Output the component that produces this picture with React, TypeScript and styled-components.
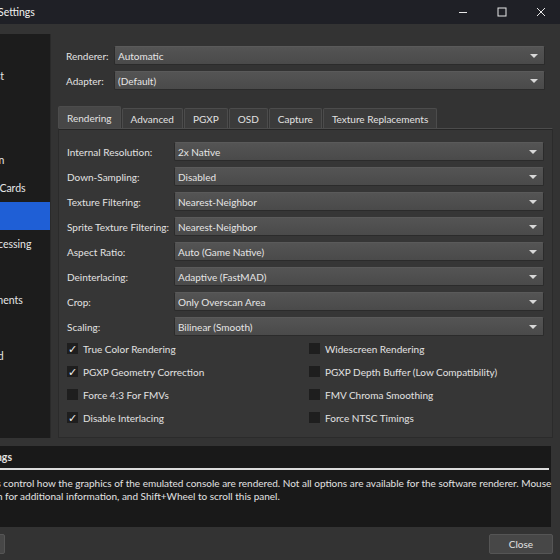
import styled, { createGlobalStyle } from "styled-components";
import { Fragment } from "react";
import type { FC } from "react";

const GlobalStyle = createGlobalStyle`
    html, body {
        margin: 0;
        padding: 0;
        background: #333333;
        overflow: hidden;
    }
    body {
        font-family: "Lato", "Noto Sans", sans-serif;
        font-size: 10px;
        color: #e2e2e2;
    }
`;

const Window = styled.div`
    width: 560px;
    height: 560px;
    display: flex;
    flex-direction: column;
    background: #333333;
    overflow: hidden;
`;

const TitleBar = styled.div`
    height: 24px;
    flex: none;
    display: flex;
    align-items: center;
    background: #1f2026;
`;

const Title = styled.span`
    margin-left: -2px;
    flex: 1;
    font-size: 10.5px;
    color: #f0f0f0;
    white-space: nowrap;
`;

const WindowButton = styled.div`
    width: 39px;
    height: 24px;
    display: flex;
    align-items: center;
    justify-content: center;
    color: #e8e8e8;
`;

const Body = styled.div`
    display: flex;
    padding: 10px 7px 0 0;
    height: 404px;
`;

const Sidebar = styled.div`
    width: 150px;
    margin-left: -100px;
    flex: none;
    background: #1c1c1c;
    border-right: 1px solid #2a2a2a;
    overflow: hidden;
`;

const SidebarItem = styled.div<{ $selected?: boolean }>`
    height: 28px;
    display: flex;
    align-items: center;
    padding-left: 58px;
    white-space: nowrap;
    font-size: 10.5px;
    background: ${({ $selected }) => ($selected ? "#1f5fd6" : "transparent")};
    color: #e6e6e6;
`;

const Main = styled.div`
    flex: 1;
    margin-left: 7px;
    padding-top: 12px;
    display: flex;
    flex-direction: column;
    min-width: 0;
`;

const TopGrid = styled.div`
    display: grid;
    grid-template-columns: 48px 1fr;
    row-gap: 6px;
    align-items: center;
    padding: 0 8px 0 8px;
`;

const Label = styled.span`
    white-space: nowrap;
`;

const ComboBox = styled.div`
    height: 19px;
    box-sizing: border-box;
    display: flex;
    align-items: center;
    padding: 0 6px 0 3px;
    border: 1px solid #2b2b2b;
    border-top-color: #5a5a5a;
    border-radius: 2px;
    background: linear-gradient(#545454, #4a4a4a);
    color: #e6e6e6;
`;

const ComboText = styled.span`
    flex: 1;
    white-space: nowrap;
`;

const Arrow = styled.span`
    width: 0;
    height: 0;
    border-left: 4px solid transparent;
    border-right: 4px solid transparent;
    border-top: 4px solid #d8d8d8;
`;

const TabBar = styled.div`
    display: flex;
    align-items: flex-end;
    gap: 1px;
    margin-top: 16px;
    height: 22px;
`;

const Tab = styled.div<{ $active?: boolean }>`
    height: ${({ $active }) => ($active ? "22px" : "20px")};
    box-sizing: border-box;
    padding: 0 8px;
    display: flex;
    align-items: center;
    border: 1px solid #4c4c4c;
    border-bottom: none;
    border-radius: 2px 2px 0 0;
    background: ${({ $active }) => ($active ? "#474747" : "#3b3b3b")};
    white-space: nowrap;
`;

const Pane = styled.div`
    flex: 1;
    border: 1px solid #2b2b2b;
    border-top: 1px solid #4c4c4c;
    box-shadow: inset 0 1px 0 #262626;
    background: #363636;
    padding: 13px 8px 0 8px;
    display: flex;
    flex-direction: column;
`;

const SettingsGrid = styled.div`
    display: grid;
    grid-template-columns: 107px 1fr;
    row-gap: 6px;
    align-items: center;
`;

const CheckGrid = styled.div`
    display: grid;
    grid-template-columns: 242px 1fr;
    grid-auto-rows: 23px;
    margin-top: 1px;
    align-items: center;
`;

const CheckRow = styled.div`
    display: flex;
    align-items: center;
    gap: 5px;
    white-space: nowrap;
`;

const Box = styled.span`
    width: 11px;
    height: 11px;
    background: #1e1e1e;
    display: flex;
    align-items: center;
    justify-content: center;
    font-size: 11px;
    line-height: 1;
    color: #f2f2f2;
`;

const Description = styled.div`
    margin: 8px 9px 0 -100px;
    height: 81px;
    background: #191919;
    box-sizing: border-box;
    padding: 3px 0 0 0;
`;

const DescTitle = styled.div`
    font-weight: bold;
    font-size: 10.5px;
    padding-left: 31px;
    height: 16px;
    display: flex;
    align-items: center;
    white-space: nowrap;
`;

const DescRule = styled.div`
    margin: 3px 2px 0 0;
    height: 2px;
    background: #dcdcdc;
`;

const DescText = styled.div`
    padding: 7px 0 0 39px;
    line-height: 12.5px;
    white-space: nowrap;
`;

const ButtonRow = styled.div`
    display: flex;
    justify-content: space-between;
    margin: 7px 7px 0 -104px;
`;

const Button = styled.div`
    height: 20px;
    min-width: 64px;
    box-sizing: border-box;
    padding: 0 17px;
    display: flex;
    align-items: center;
    justify-content: center;
    border: 1px solid #555555;
    border-radius: 2px;
    background: #474747;
    white-space: nowrap;
`;

const Combo: FC<{ value: string }> = ({ value }) => (
    <ComboBox>
        <ComboText>{value}</ComboText>
        <Arrow />
    </ComboBox>
);

const sidebarItems = [
    "Interface",
    "Game List",
    "Console",
    "BIOS",
    "Emulation",
    "Memory Cards",
    "Graphics",
    "Post-Processing",
    "Audio",
    "Achievements",
    "Folders",
    "Advanced",
];

const settings: [string, string][] = [
    ["Internal Resolution:", "2x Native"],
    ["Down-Sampling:", "Disabled"],
    ["Texture Filtering:", "Nearest-Neighbor"],
    ["Sprite Texture Filtering:", "Nearest-Neighbor"],
    ["Aspect Ratio:", "Auto (Game Native)"],
    ["Deinterlacing:", "Adaptive (FastMAD)"],
    ["Crop:", "Only Overscan Area"],
    ["Scaling:", "Bilinear (Smooth)"],
];

const checks: [string, boolean][] = [
    ["True Color Rendering", true],
    ["Widescreen Rendering", false],
    ["PGXP Geometry Correction", true],
    ["PGXP Depth Buffer (Low Compatibility)", false],
    ["Force 4:3 For FMVs", false],
    ["FMV Chroma Smoothing", false],
    ["Disable Interlacing", true],
    ["Force NTSC Timings", false],
];

const tabs = ["Rendering", "Advanced", "PGXP", "OSD", "Capture", "Texture Replacements"];

export default function App() {
    return (
        <Window>
            <GlobalStyle />
            <TitleBar>
                <Title>Settings</Title>
                <WindowButton>
                    <svg width="10" height="10" viewBox="0 0 10 10">
                        <path d="M1 5.5h8" stroke="currentColor" strokeWidth="1" />
                    </svg>
                </WindowButton>
                <WindowButton>
                    <svg width="10" height="10" viewBox="0 0 10 10">
                        <rect x="1" y="1" width="8" height="8" fill="none" stroke="currentColor" strokeWidth="1" />
                    </svg>
                </WindowButton>
                <WindowButton>
                    <svg width="10" height="10" viewBox="0 0 10 10">
                        <path d="M1 1l8 8M9 1l-8 8" stroke="currentColor" strokeWidth="1" />
                    </svg>
                </WindowButton>
            </TitleBar>
            <Body>
                <Sidebar>
                    {sidebarItems.map((item) => (
                        <SidebarItem key={item} $selected={item === "Graphics"}>
                            {item}
                        </SidebarItem>
                    ))}
                </Sidebar>
                <Main>
                    <TopGrid>
                        <Label>Renderer:</Label>
                        <Combo value="Automatic" />
                        <Label>Adapter:</Label>
                        <Combo value="(Default)" />
                    </TopGrid>
                    <TabBar>
                        {tabs.map((tab) => (
                            <Tab key={tab} $active={tab === "Rendering"}>
                                {tab}
                            </Tab>
                        ))}
                    </TabBar>
                    <Pane>
                        <SettingsGrid>
                            {settings.map(([label, value]) => (
                                <Fragment key={label}>
                                    <Label>{label}</Label>
                                    <Combo value={value} />
                                </Fragment>
                            ))}
                        </SettingsGrid>
                        <CheckGrid>
                            {checks.map(([label, checked]) => (
                                <CheckRow key={label}>
                                    <Box>{checked ? "✓" : ""}</Box>
                                    {label}
                                </CheckRow>
                            ))}
                        </CheckGrid>
                    </Pane>
                </Main>
            </Body>
            <Description>
                <DescTitle>Graphics Settings</DescTitle>
                <DescRule />
                <DescText>
                    These options control how the graphics of the emulated console are rendered. Not all options are
                    available for the software renderer. Mouse
                    <br />
                    over an option for additional information, and Shift+Wheel to scroll this panel.
                </DescText>
            </Description>
            <ButtonRow>
                <Button>Restore Defaults</Button>
                <Button>Close</Button>
            </ButtonRow>
        </Window>
    );
}
